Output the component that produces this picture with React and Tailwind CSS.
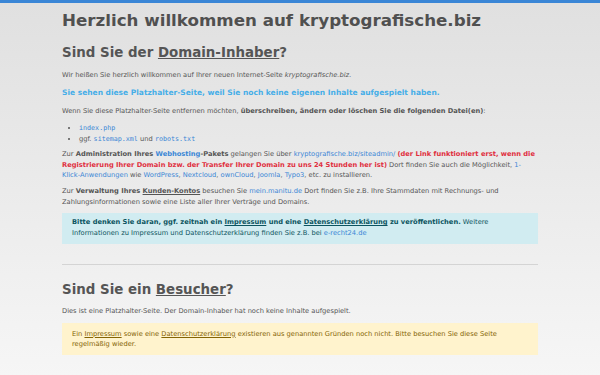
export default function App() {
  const link = "text-[#3b87d6]";
  const mono = { fontFamily: '"DejaVu Sans Mono", monospace' };
  return (
    <div className="min-h-[375px] bg-gradient-to-b from-[#e0e0e0] to-[#f6f6f6] border-t-[3px] border-[#3a86d6] text-[#555]" style={{ fontFamily: '"DejaVu Sans", Verdana, sans-serif' }}>
      <div className="w-[476px] ml-[62px] pt-[7px]">
        <h1 className="text-[16.7px] leading-[20px] font-bold text-[#505050] whitespace-nowrap">Herzlich willkommen auf kryptografische.biz</h1>
        <h2 className="mt-[15px] text-[13.4px] leading-[16px] font-bold text-[#555]">Sind Sie der <span className="underline">Domain-Inhaber</span>?</h2>
        <div className="text-[6.7px] leading-[10.5px]">
          <p className="mt-[9px]">Wir heißen Sie herzlich willkommen auf Ihrer neuen Internet-Seite <i>kryptografische.biz</i>.</p>
          <p className="mt-[6.75px] text-[7.5px] leading-[12px] font-bold text-[#45aee8]">Sie sehen diese Platzhalter-Seite, weil Sie noch keine eigenen Inhalte aufgespielt haben.</p>
          <p className="mt-[6.75px]">Wenn Sie diese Platzhalter-Seite entfernen möchten, <b>überschreiben, ändern oder löschen Sie die folgenden Datei(en)</b>:</p>
          <ul className="mt-[6.5px] pl-[17px] list-disc">
            <li><span className={link} style={mono}>index.php</span></li>
            <li>ggf. <span className={link} style={mono}>sitemap.xml</span> und <span className={link} style={mono}>robots.txt</span></li>
          </ul>
          <p className="mt-[5px]">Zur <b>Administration Ihres <span className={link}>Webhosting</span>-Pakets</b> gelangen Sie über <span className={link}>kryptografische.biz/siteadmin/</span> <b className="text-[#e0303f]">(der Link funktioniert erst, wenn die Registrierung Ihrer Domain bzw. der Transfer Ihrer Domain zu uns 24 Stunden her ist)</b> Dort finden Sie auch die Möglichkeit, <span className={link}>1-Klick-Anwendungen</span> wie <span className={link}>WordPress</span>, <span className={link}>Nextcloud</span>, <span className={link}>ownCloud</span>, <span className={link}>Joomla</span>, <span className={link}>Typo3</span>, etc. zu installieren.</p>
          <p className="mt-[5.5px]">Zur <b>Verwaltung Ihres <span className="underline">Kunden-Kontos</span></b> besuchen Sie <span className={link}>mein.manitu.de</span> Dort finden Sie z.B. Ihre Stammdaten mit Rechnungs- und Zahlungsinformationen sowie eine Liste aller Ihrer Verträge und Domains.</p>
          <div className="mt-[6.25px] bg-[#d1ecf1] text-[#0c5460] pl-[10px] pr-[10px] pt-[4px] pb-[6px]">
            <b>Bitte denken Sie daran, ggf. zeitnah ein <span className="underline">Impressum</span> und eine <span className="underline">Datenschutzerklärung</span> zu veröffentlichen.</b> Weitere Informationen zu Impressum und Datenschutzerklärung finden Sie z.B. bei <span className={link}>e-recht24.de</span>
          </div>
        </div>
        <div className="mt-[20px] h-px bg-[#d4d4d4]" />
        <h2 className="mt-[17px] text-[13.4px] leading-[16px] font-bold text-[#555]">Sind Sie ein <span className="underline">Besucher</span>?</h2>
        <div className="text-[6.7px] leading-[10.5px]">
          <p className="mt-[7.75px]">Dies ist eine Platzhalter-Seite. Der Domain-Inhaber hat noch keine Inhalte aufgespielt.</p>
          <div className="mt-[6.75px] bg-[#fff3cd] text-[#856404] pl-[10px] pr-[10px] pt-[5.5px] pb-[5px]">
            Ein <span className="underline">Impressum</span> sowie eine <span className="underline">Datenschutzerklärung</span> existieren aus genannten Gründen noch nicht. Bitte besuchen Sie diese Seite regelmäßig wieder.
          </div>
        </div>
        <div className="mt-[20px] h-px bg-[#d4d4d4]" />
      </div>
    </div>
  );
}
